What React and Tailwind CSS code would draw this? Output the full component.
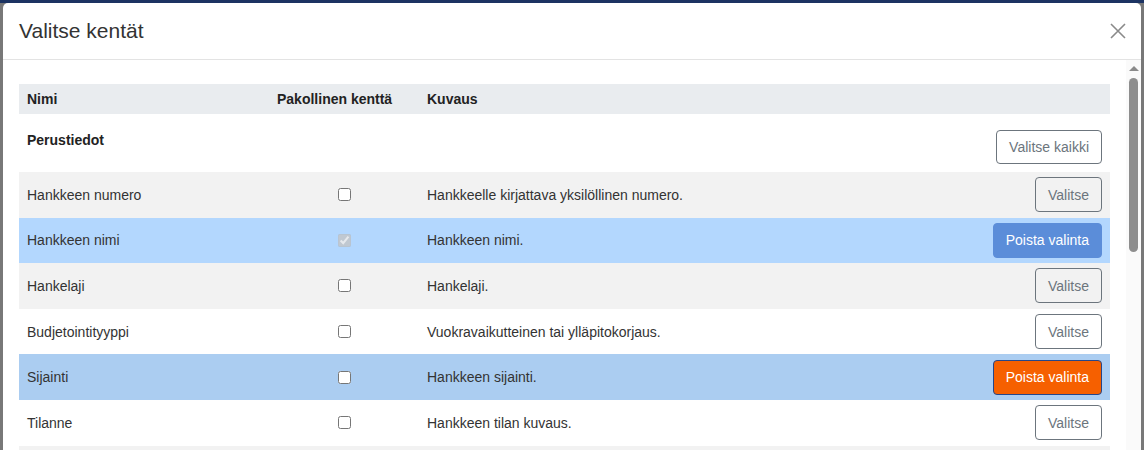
import React from "react";

const rows = [
  { name: "Hankkeen numero", desc: "Hankkeelle kirjattava yksilöllinen numero.", bg: "bg-[#f2f2f2]", state: "off" },
  { name: "Hankkeen nimi", desc: "Hankkeen nimi.", bg: "bg-[#b3d7fe]", state: "on", locked: true },
  { name: "Hankelaji", desc: "Hankelaji.", bg: "bg-[#f2f2f2]", state: "off" },
  { name: "Budjetointityyppi", desc: "Vuokravaikutteinen tai ylläpitokorjaus.", bg: "bg-white", state: "off" },
  { name: "Sijainti", desc: "Hankkeen sijainti.", bg: "bg-[#abcdf1]", state: "focus" },
  { name: "Tilanne", desc: "Hankkeen tilan kuvaus.", bg: "bg-white", state: "off" },
];

function RowButton({ state }) {
  if (state === "on") {
    return (
      <button className="h-[35px] px-3 rounded-[4px] border border-[#5b8dd9] bg-[#5b8dd9] text-white text-sm">
        Poista valinta
      </button>
    );
  }
  if (state === "focus") {
    return (
      <button className="h-[35px] px-3 rounded-[4px] border border-[#25468a] bg-[#f66000] text-white text-sm">
        Poista valinta
      </button>
    );
  }
  return (
    <button className="h-[35px] px-3 rounded-[4px] border border-[#6c757d] bg-transparent text-[#6c757d] text-sm">
      Valitse
    </button>
  );
}

export default function App() {
  return (
    <div
      className="w-[1144px] h-[450px] overflow-hidden bg-[#787878] border-t-[3px] border-[#1c3362] px-[3px]"
      style={{ fontFamily: '"Liberation Sans", Arial, sans-serif' }}
    >
      <div className="h-full bg-white rounded-t-[5px] flex flex-col">
        {/* header */}
        <div className="h-[57px] shrink-0 flex items-center justify-between pl-4 pr-[15px] border-b border-[#e3e3e3]">
          <h2 className="text-[21px] leading-[30px] text-[#333]">Valitse kentät</h2>
          <svg width="16" height="16" viewBox="0 0 16 16" className="text-[#8a8a8a]">
            <path d="M1 1L15 15M15 1L1 15" stroke="currentColor" strokeWidth="1.6" fill="none" />
          </svg>
        </div>

        {/* body */}
        <div className="flex-1 flex min-h-0">
          <div className="flex-1 pl-4 pr-4 pt-6 overflow-hidden">
            <div className="h-[30px] flex items-center bg-[#e9ecef] text-sm font-bold text-[#222]">
              <div className="w-[250px] px-2">Nimi</div>
              <div className="w-[150px] px-2">Pakollinen kenttä</div>
              <div className="flex-1 px-2">Kuvaus</div>
            </div>

            <div className="h-[58px] flex items-start justify-between pt-4 px-2">
              <div className="text-sm leading-5 font-bold text-[#222]">Perustiedot</div>
              <button className="h-[34px] px-3 rounded-[4px] border border-[#6c757d] text-[#6c757d] text-sm">
                Valitse kaikki
              </button>
            </div>

            {rows.map((r) => (
              <div key={r.name} className={`h-[45.6px] flex items-center text-sm text-[#333] ${r.bg}`}>
                <div className="w-[250px] px-2">{r.name}</div>
                <div className="w-[150px] px-2 flex justify-center">
                  <input
                    type="checkbox"
                    className="m-0 w-[13px] h-[13px]"
                    defaultChecked={!!r.locked}
                    disabled={!!r.locked}
                  />
                </div>
                <div className="flex-1 px-2">{r.desc}</div>
                <div className="px-2">
                  <RowButton state={r.state} />
                </div>
              </div>
            ))}
            <div className="h-[46px] bg-[#f2f2f2]" />
          </div>

          {/* scrollbar */}
          <div className="w-[15px] shrink-0 bg-[#fafafa] flex flex-col items-center pt-[6px]">
            <div className="w-0 h-0 border-l-[5px] border-r-[5px] border-b-[5px] border-l-transparent border-r-transparent border-b-[#8a8a8a]" />
            <div className="mt-[7px] w-[9px] h-[174px] rounded-full bg-[#8e8e8e]" />
          </div>
        </div>
      </div>
    </div>
  );
}
